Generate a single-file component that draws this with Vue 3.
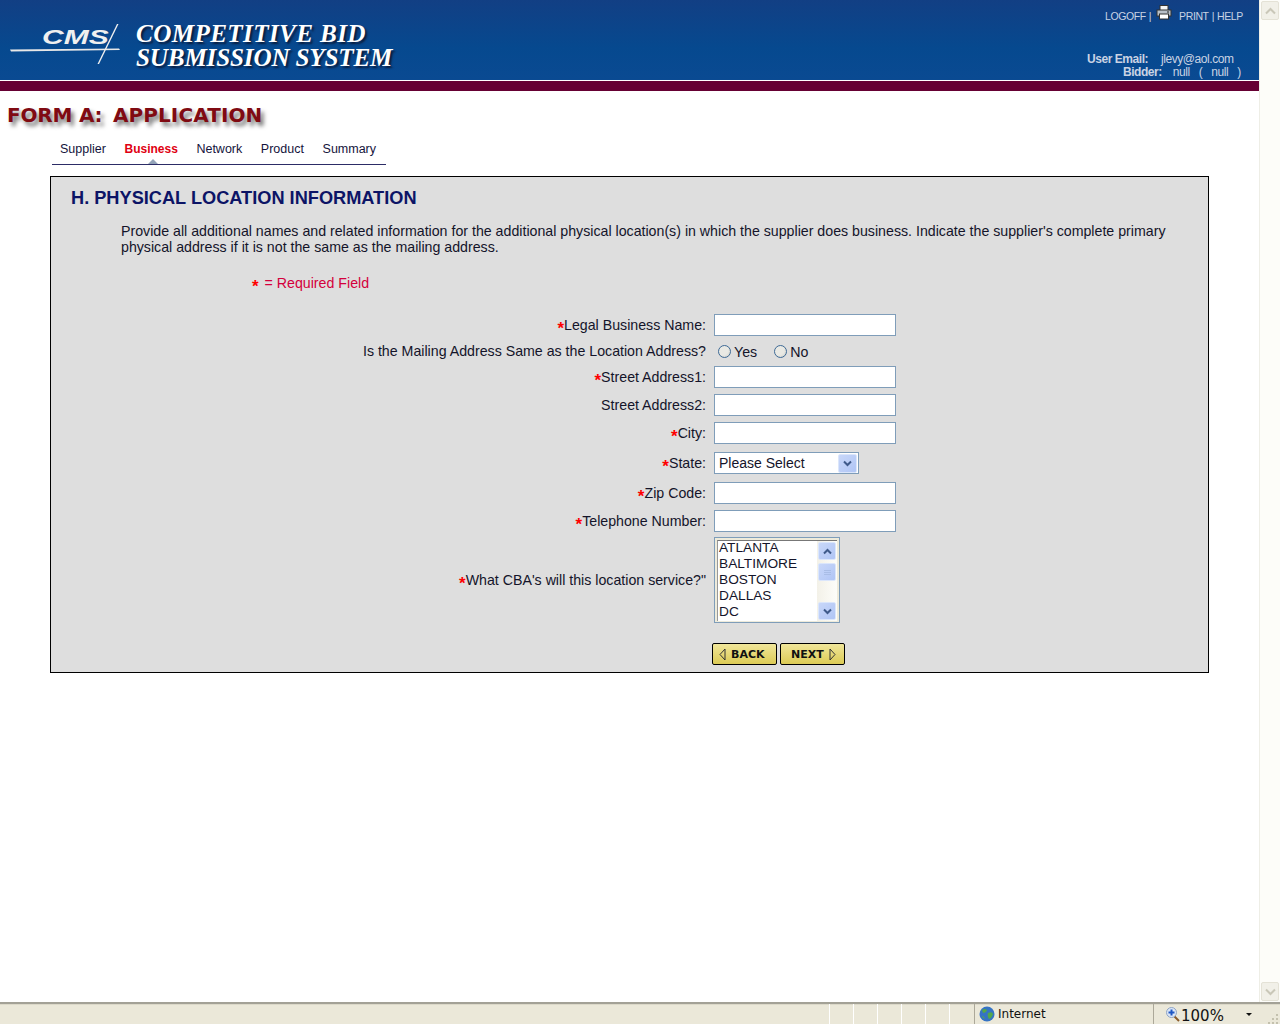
<script setup>
const tabs = [
  { name: 'Supplier' },
  { name: 'Business', active: true },
  { name: 'Network' },
  { name: 'Product' },
  { name: 'Summary' },
]
const cities = ['ATLANTA', 'BALTIMORE', 'BOSTON', 'DALLAS', 'DC']
const dividers = [0, 1, 2, 3, 4, 5]
</script>

<template>
  <div class="window">
    <div class="browser">
      <div class="page">
        <header class="banner">
          <div class="brand">
            <svg class="logo" width="114" height="46" viewBox="0 0 114 46">
              <path d="M1 27.5 L110 26.5 L111 28 L2 29.5 Z" fill="#e8e8e8" />
              <path d="M108 2 L109.5 2 L90 42 L88.5 42 Z" fill="#f0f0f0" />
              <text x="33" y="22" class="logo-text">CMS</text>
            </svg>
            <div class="title">
              <div class="line-one">COMPETITIVE BID</div>
              <div class="line-two">SUBMISSION SYSTEM</div>
            </div>
          </div>
          <div class="account">
            <div class="links">
              <span>LOGOFF</span><span class="sep">|</span>
              <svg class="printer" width="16" height="15" viewBox="0 0 16 15">
                <rect x="4" y="0.5" width="8" height="5" fill="#f4f4f4" stroke="#333" />
                <rect x="1" y="5" width="14" height="6" fill="#b9c0c8" stroke="#333" />
                <rect x="3.5" y="9" width="9" height="5" fill="#fff" stroke="#333" />
                <rect x="11" y="6.5" width="2" height="1" fill="#222" />
              </svg>
              <span class="print">PRINT</span><span class="sep two">|</span><span>HELP</span>
            </div>
            <div class="user">
              <div class="user-email"><b>User Email:</b><span>jlevy@aol.com</span></div>
              <div class="user-bidder"><b>Bidder:</b><span>null</span><span>(</span><span>null</span><span>)</span></div>
            </div>
          </div>
        </header>
        <div class="maroon"></div>

        <h1 class="form-title">FORM A:&nbsp; <span class="app-word">APPLICATION</span></h1>

        <nav class="tabs">
          <a v-for="t in tabs" :key="t.name" :class="['tab', { active: t.active }]">{{ t.name }}</a>
        </nav>

        <section class="panel">
          <h2>H. PHYSICAL LOCATION INFORMATION</h2>
          <p class="intro">
            Provide all additional names and related information for the additional physical location(s) in which the supplier does business. Indicate the supplier's complete primary physical address if it is not the same as the mailing address.
          </p>
          <div class="required"><span class="star">*</span> = Required Field</div>

          <div class="form">
            <div class="row r-legal">
              <label><span class="star">*</span>Legal Business Name:</label>
              <input class="text" type="text" />
            </div>
            <div class="row r-radio">
              <label>Is the Mailing Address Same as the Location Address?</label>
              <div class="radios">
                <span class="radio"></span><span class="radio-label">Yes</span>
                <span class="radio second"></span><span class="radio-label">No</span>
              </div>
            </div>
            <div class="row r-s1">
              <label><span class="star">*</span>Street Address1:</label>
              <input class="text" type="text" />
            </div>
            <div class="row r-s2">
              <label>Street Address2:</label>
              <input class="text" type="text" />
            </div>
            <div class="row r-city">
              <label><span class="star">*</span>City:</label>
              <input class="text" type="text" />
            </div>
            <div class="row r-state">
              <label><span class="star">*</span>State:</label>
              <div class="select">
                <span>Please Select</span>
                <span class="sbtn select-btn">
                  <svg width="9" height="7" viewBox="0 0 9 7"><path d="M1 1.5 L4.5 5 L8 1.5" fill="none" stroke="#3f5a8a" stroke-width="2" /></svg>
                </span>
              </div>
            </div>
            <div class="row r-zip">
              <label><span class="star">*</span>Zip Code:</label>
              <input class="text" type="text" />
            </div>
            <div class="row r-tel">
              <label><span class="star">*</span>Telephone Number:</label>
              <input class="text" type="text" />
            </div>
            <div class="row r-list">
              <label><span class="star">*</span>What CBA's will this location service?"</label>
              <div class="listbox">
                <div class="list-inner">
                  <div class="items">
                    <div v-for="c in cities" :key="c">{{ c }}</div>
                  </div>
                  <div class="list-scroll">
                    <span class="sbtn list-btn">
                      <svg width="9" height="7" viewBox="0 0 9 7"><path d="M1 5.5 L4.5 2 L8 5.5" fill="none" stroke="#3f5a8a" stroke-width="2" /></svg>
                    </span>
                    <span class="sbtn list-thumb">
                      <svg width="7" height="7" viewBox="0 0 7 7"><path d="M0 1.5 H7 M0 3.5 H7 M0 5.5 H7" stroke="#a9bde6" /></svg>
                    </span>
                    <span class="spacer"></span>
                    <span class="sbtn list-btn">
                      <svg width="9" height="7" viewBox="0 0 9 7"><path d="M1 1.5 L4.5 5 L8 1.5" fill="none" stroke="#3f5a8a" stroke-width="2" /></svg>
                    </span>
                  </div>
                </div>
              </div>
            </div>
            <div class="buttons">
              <button class="nav-btn back">
                <svg width="7" height="13" viewBox="0 0 7 13"><path d="M6 1 L1 6.5 L6 12 Z" fill="none" stroke="#333" /></svg>
                <span>BACK</span>
              </button>
              <button class="nav-btn next">
                <span>NEXT</span>
                <svg width="7" height="13" viewBox="0 0 7 13"><path d="M1 1 L6 6.5 L1 12 Z" fill="none" stroke="#333" /></svg>
              </button>
            </div>
          </div>
        </section>
      </div>

      <aside class="scrollbar">
        <span class="sb-btn">
          <svg width="11" height="8" viewBox="0 0 11 8"><path d="M1 6.5 L5.5 2 L10 6.5" fill="none" stroke="#c9c7b8" stroke-width="2" /></svg>
        </span>
        <span class="sb-btn">
          <svg width="11" height="8" viewBox="0 0 11 8"><path d="M1 1.5 L5.5 6 L10 1.5" fill="none" stroke="#c9c7b8" stroke-width="2" /></svg>
        </span>
      </aside>
    </div>

    <footer class="status">
      <div class="status-fill"></div>
      <span v-for="d in dividers" :key="d" class="status-cell"></span>
      <div class="zone">
        <svg width="16" height="16" viewBox="0 0 16 16">
          <circle cx="8" cy="8" r="7.5" fill="#3573c4" />
          <path d="M3 4 Q6 2 8 4 Q7 7 4 7 Z M9 7 Q13 5 14 8 Q13 12 10 13 Q8 10 9 7 Z M3 10 Q5 10 6 13 Q4 13 3 10 Z" fill="#53a84a" />
        </svg>
        <span>Internet</span>
      </div>
      <div class="zoom">
        <svg width="14" height="15" viewBox="0 0 14 15">
          <path d="M8 9 L13 14" stroke="#8a5a2a" stroke-width="2" />
          <circle cx="5.5" cy="5.5" r="5" fill="#dbe6f7" stroke="#8ea3c4" />
          <path d="M5.5 2.5 V8.5 M2.5 5.5 H8.5" stroke="#1f57c4" stroke-width="2" />
        </svg>
        <span class="zoom-text">100%</span>
        <span class="caret"></span>
        <svg class="grip" width="12" height="12" viewBox="0 0 12 12">
          <path d="M9 2h2v2H9zM5 6h2v2H5zM9 6h2v2H9zM1 10h2v2H1zM5 10h2v2H5zM9 10h2v2H9z" fill="#c4c1ae" />
        </svg>
      </div>
    </footer>
  </div>
</template>

<style scoped>
.window {
  width: 1280px;
  height: 1024px;
  display: flex;
  flex-direction: column;
  overflow: hidden;
  font-family: "Liberation Sans", Arial, sans-serif;
  background: #fff;
}
.browser {
  flex: 1;
  min-height: 0;
  display: flex;
}
.page {
  flex: 1;
  min-width: 0;
}
.banner {
  height: 80px;
  display: flex;
  justify-content: space-between;
  background: linear-gradient(to bottom, #123f84 0%, #06498f 60%, #0a4a92 100%);
  border-bottom: 1px solid #fff;
  color: #fff;
}
.brand {
  display: flex;
  padding-left: 9px;
}
.logo {
  margin-top: 22px;
}
.logo-text {
  font: italic bold 20px "Liberation Sans", sans-serif;
  fill: #f0f0f0;
  transform: scaleX(1.5);
  transform-origin: 33px 22px;
}
.title {
  margin: 22px 0 0 13px;
  font: italic bold 25.2px/24px "Liberation Serif", serif;
  color: #fff;
  text-shadow: 2px 2px 2px #0b1c3c;
  white-space: nowrap;
}
.line-one {
  letter-spacing: 0.35px;
}
.line-two {
  letter-spacing: -0.2px;
}
.account {
  width: 174px;
  font-size: 12px;
  letter-spacing: -0.45px;
  color: #c9d3e4;
}
.links {
  height: 24px;
  display: flex;
  align-items: flex-start;
  padding: 10px 0 0 20px;
  box-sizing: content-box;
  white-space: nowrap;
  font-size: 10.5px;
  letter-spacing: -0.4px;
  line-height: 13px;
}
.sep {
  margin: 0 5px 0 3px;
}
.sep.two {
  margin: 0 3px 0 3px;
}
.printer {
  margin: -5px 0 0 0;
}
.print {
  margin-left: 7px;
}
.user {
  margin-top: 19px;
  line-height: 13px;
  white-space: nowrap;
}
.user b {
  color: #c9d3e4;
}
.user-email {
  padding-left: 2px;
  display: flex;
  gap: 13px;
}
.user-bidder {
  padding-left: 38px;
  display: flex;
  gap: 9px;
}
.user-bidder b {
  margin-right: 2px;
}
.maroon {
  height: 10px;
  background: #660033;
}
.form-title {
  margin: 11px 0 0 7px;
  height: 26px;
  font: bold 20px/26px "DejaVu Sans", sans-serif;
  letter-spacing: -0.2px;
  color: #800a12;
  text-shadow: 3px 4px 4px #777;
  white-space: nowrap;
}
.app-word {
  margin-left: -3px;
  letter-spacing: 0.1px;
}
.tabs {
  margin: 13px 0 0 52px;
  width: 334px;
  height: 24px;
  box-sizing: border-box;
  padding-left: 8px;
  display: flex;
  gap: 18.6px;
  border-bottom: 1px solid #2c2c66;
  font-size: 12.5px;
  line-height: 17px;
}
.tab {
  color: #14143c;
  position: relative;
}
.tab.active {
  color: #e00012;
  font-weight: bold;
  font-size: 12px;
}
.tab.active::after {
  content: "";
  position: absolute;
  left: 50%;
  margin-left: -3px;
  bottom: 0;
  border: 5px solid transparent;
  border-top: 0;
  border-bottom-color: #93a3b8;
}
.panel {
  margin: 11px 0 0 50px;
  width: 1159px;
  height: 497px;
  box-sizing: border-box;
  background: #dedede;
  border: 1px solid #000;
  padding: 11px 0 0 20px;
}
h2 {
  margin: 0;
  font: bold 18.2px/21px "Liberation Sans", sans-serif;
  color: #0c1466;
}
.intro {
  margin: 14px 35px 0 50px;
  font-size: 14.2px;
  line-height: 16px;
  color: #14142a;
}
.required {
  margin: 20px 0 0 181px;
  font-size: 14.2px;
  line-height: 16px;
  color: #d4003c;
}
.star {
  color: #f00;
  font-weight: bold;
  font-size: 17px;
  line-height: 0;
  vertical-align: -4px;
}
.required .star {
  margin-right: 2px;
}
.form {
  margin: 23px 0 0 0;
  font-size: 14.2px;
  color: #14142a;
}
.row {
  display: grid;
  grid-template-columns: 635px auto;
  column-gap: 8px;
  align-items: center;
  justify-content: start;
}
.row label {
  text-align: right;
  line-height: 16px;
  white-space: nowrap;
}
.text {
  display: block;
  width: 182px;
  height: 22px;
  box-sizing: border-box;
  padding: 0;
  background: #fff;
  border: 1px solid #7f9db9;
  outline: none;
}
.r-radio { height: 30px; }
.r-s1, .r-s2 { margin-bottom: 6px; }
.r-state { margin: 8px 0 8px; }
.r-zip { margin-bottom: 6px; }
.r-tel { margin-bottom: 5px; }
.radios {
  display: flex;
  align-items: center;
  padding: 0 0 0 4px;
  line-height: 16px;
}
.radio {
  width: 11px;
  height: 11px;
  border-radius: 50%;
  border: 1px solid #3e6a96;
  background: radial-gradient(circle at 40% 40%, #e9e9e4 50%, #c9c9c2 100%);
}
.radio.second {
  margin-left: 17px;
}
.radio-label {
  margin-left: 3px;
  padding-top: 2px;
}
.select {
  width: 145px;
  height: 22px;
  box-sizing: border-box;
  background: #fff;
  border: 1px solid #7f9db9;
  display: flex;
  align-items: center;
  justify-content: space-between;
  padding: 0 1px 0 4px;
  color: #14142a;
  font-size: 14px;
}
.sbtn {
  display: flex;
  align-items: center;
  justify-content: center;
  background: linear-gradient(135deg, #c8d7f9, #b0c5f5);
  border: 1px solid #dbe6fb;
  box-sizing: border-box;
  border-radius: 2px;
}
.select-btn {
  width: 19px;
  height: 19px;
}
.listbox {
  width: 126px;
  height: 86px;
  box-sizing: border-box;
  border: 1px solid #7f9db9;
  background: #eeebdb;
  padding: 2px;
}
.list-inner {
  height: 100%;
  display: flex;
  background: #fff;
  border-top: 1px solid #777;
  border-left: 1px solid #999;
}
.items {
  flex: 1;
  margin-top: -1px;
  padding: 0 0 0 1px;
  line-height: 16px;
  font-size: 13.7px;
  color: #14142a;
}
.list-scroll {
  width: 20px;
  display: flex;
  flex-direction: column;
  background: linear-gradient(to right, #f3f1e8, #fdfdf9);
  padding-top: 1px;
  padding-bottom: 1px;
}
.list-btn {
  width: 18px;
  height: 18px;
  flex: none;
  margin: 0 0 0 1px;
}
.list-thumb {
  width: 18px;
  height: 18px;
  flex: none;
  margin: 3px 0 0 1px;
}
.spacer {
  flex: 1;
}
.buttons {
  display: flex;
  gap: 3px;
  margin: 20px 0 0 641px;
}
.nav-btn {
  width: 65px;
  height: 22px;
  padding: 0;
  display: flex;
  align-items: center;
  gap: 5px;
  box-sizing: border-box;
  border: 1px solid #000;
  border-radius: 2px;
  background: linear-gradient(to bottom, #f0e69a, #dccb55);
  font: bold 11px "DejaVu Sans", sans-serif;
  color: #111;
}
.back { justify-content: flex-start; padding-left: 6px; }
.next { justify-content: flex-start; padding-left: 10px; }
.scrollbar {
  width: 21px;
  flex: none;
  display: flex;
  flex-direction: column;
  justify-content: space-between;
  background: #fdfdf9;
  border-left: 1px solid #eeeee6;
  box-sizing: border-box;
}
.sb-btn {
  width: 18px;
  height: 19px;
  margin: 1px;
  display: flex;
  align-items: center;
  justify-content: center;
  background: #f1f0e8;
  border: 1px solid #e4e2d6;
  border-radius: 2px;
  box-sizing: border-box;
}
.status {
  height: 22px;
  flex: none;
  box-sizing: border-box;
  display: flex;
  align-items: stretch;
  background: #ebe8d9;
  border-top: 2px solid #a3a196;
  box-shadow: inset 0 1px 0 #dcd9c9;
  font: 13px "DejaVu Sans", sans-serif;
  color: #111;
}
.status-fill {
  width: 829px;
}
.status-cell {
  width: 24px;
  box-sizing: border-box;
  border-left: 1px solid #fff;
}
.zone {
  width: 179px;
  border-left: 1px solid #aca899;
  display: flex;
  align-items: center;
  gap: 3px;
  padding-left: 4px;
  box-sizing: border-box;
  margin-left: 1px;
  font-size: 12px;
}
.zoom {
  flex: 1;
  border-left: 1px solid #aca899;
  display: flex;
  align-items: center;
  padding-left: 12px;
  position: relative;
}
.zoom-text {
  margin-left: 1px;
  font-size: 15px;
  padding-top: 4px;
}
.caret {
  margin-left: 22px;
  border: 3px solid transparent;
  border-top: 3px solid #111;
  border-bottom: 0;
}
.grip {
  position: absolute;
  right: 1px;
  bottom: 0;
}
</style>
